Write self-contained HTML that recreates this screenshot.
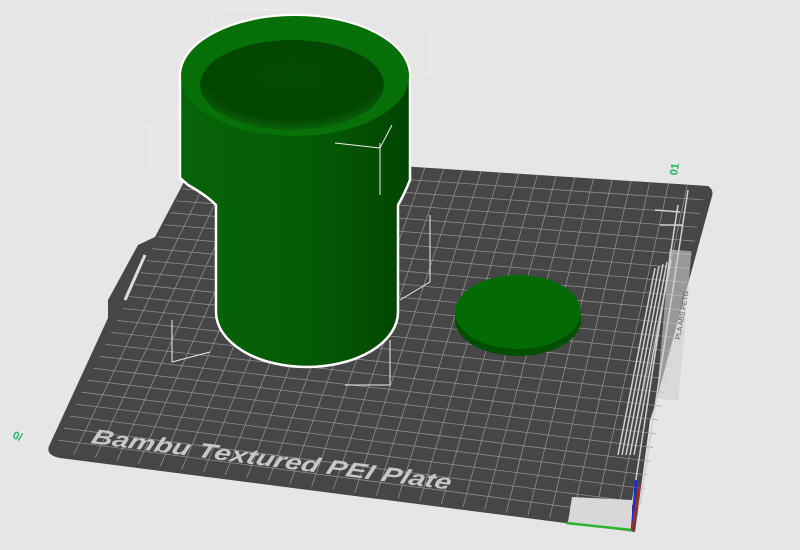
<!DOCTYPE html>
<html><head><meta charset="utf-8"><style>
body{margin:0;background:#e6e6e6;width:800px;height:550px;overflow:hidden;font-family:"Liberation Sans",sans-serif}
svg{display:block}
</style></head><body>
<svg id="s" width="800" height="550" viewBox="0 0 800 550">
<defs>
<linearGradient id="g" x1="0" x2="1"><stop offset="0" stop-color="#086408"/><stop offset="0.6" stop-color="#045a04"/><stop offset="1" stop-color="#014401"/></linearGradient>
<radialGradient id="gi" cx="0.5" cy="0.4" r="0.6"><stop offset="0" stop-color="#034c03"/><stop offset="0.8" stop-color="#024602"/><stop offset="1" stop-color="#0a620a"/></radialGradient>
</defs>
<path d="M185,180 L200,153 L708,186 Q714,190 712,196 L655,405 L650,420 L635,532 L60,458 Q44,455 50,444 L108,318 L108,300 L138,245 L155,237 Z" fill="#464646"/>
<g id="grid" stroke="#9a9a9a" stroke-width="0.8" opacity="0.85"></g>
<text x="0" y="0" font-size="21" font-style="italic" font-weight="bold" fill="#c8c8c8" transform="translate(90 443) rotate(7.4) skewX(-12)" textLength="362" lengthAdjust="spacingAndGlyphs">Bambu Textured PEI Plate</text>
<path d="M125,300 L145,255" stroke="#ddd" stroke-width="3"/>
<path d="M572,497 L632,500 L632,530 L568,522 Z" fill="#d8d8d8"/>
<g stroke="#cfcfcf" stroke-width="1.5" fill="none">
<path d="M618,455 L655,268 M622,455 L659,266 M626,455 L663,264 M630,455 L667,262 M634,455 L671,260 M632,505 L678,205 M640,505 L688,190"/>
<path d="M655,210 L680,212 M660,225 L682,225"/>
</g>
<rect x="663" y="250" width="22" height="150" fill="#d0d0d0" transform="rotate(5 674 325)" opacity="0.6"/>
<text x="680" y="340" font-size="7" fill="#555" transform="rotate(-80 680 340)">PLA ABS PETG</text>
<path d="M566,523 L632,530" stroke="#2db52d" stroke-width="2.5"/>
<path d="M632,530 L636,480" stroke="#1a2fd0" stroke-width="2.5"/>
<path d="M632,530 L640,485" stroke="#c02020" stroke-width="2"/>
<text x="12" y="438" font-size="11" fill="#1db55a" font-weight="bold" transform="rotate(20 12 438)">0/</text>
<text x="672" y="170" font-size="11" fill="#1db55a" font-weight="bold" transform="rotate(-80 678 170)">01</text>
<g stroke="#eee" stroke-width="1" fill="none">
<path d="M150,125 L150,170 M150,125 L190,105 M213,8 L213,55 M213,8 L290,10 M430,28 L430,75 M390,10 L430,28 M172,320 L172,362 L210,352 M390,340 L390,385 L345,385 M430,215 L430,282 L400,300"/>
</g>
<ellipse cx="518" cy="320" rx="63" ry="36" fill="#024e02"/>
<rect x="455" y="312" width="126" height="8" fill="#024e02"/>
<ellipse cx="518" cy="312" rx="63" ry="37" fill="#046a04"/>
<path d="M180,76 A115,61 0 0 1 410,76 L410,180 Q404,195 398,205 L398,312 A91,55 0 0 1 216,312 L216,205 Q206,195 188,185 L180,178 Z" fill="url(#g)" stroke="#fff" stroke-width="2.5"/>
<ellipse cx="295" cy="76" rx="114" ry="60" fill="#087008"/>
<ellipse cx="292" cy="85" rx="92" ry="45" fill="url(#gi)"/>
<path d="M380,143 L380,195 M335,143 L380,148 M380,148 L392,125" stroke="#eee" stroke-width="1" fill="none"/>
</svg>
<script>
var g=document.getElementById('grid');
var TL=[200,153],TR=[706,186],BR=[636,530],BL=[52,452];
function P(u,v){var tx=TL[0]+(TR[0]-TL[0])*u,ty=TL[1]+(TR[1]-TL[1])*u,bx=BL[0]+(BR[0]-BL[0])*u,by=BL[1]+(BR[1]-BL[1])*u;return [tx+(bx-tx)*v,ty+(by-ty)*v];}
var h='';
for(var i=1;i<27;i++){var u=i/27,a=P(u,0),b=P(u,1);h+='<line x1="'+a[0]+'" y1="'+a[1]+'" x2="'+b[0]+'" y2="'+b[1]+'"/>';}
for(var j=1;j<25;j++){var v=j/25,a=P(0,v),b=P(1,v);h+='<line x1="'+a[0]+'" y1="'+a[1]+'" x2="'+b[0]+'" y2="'+b[1]+'"/>';}
g.innerHTML=h;
</script>
</body></html>
